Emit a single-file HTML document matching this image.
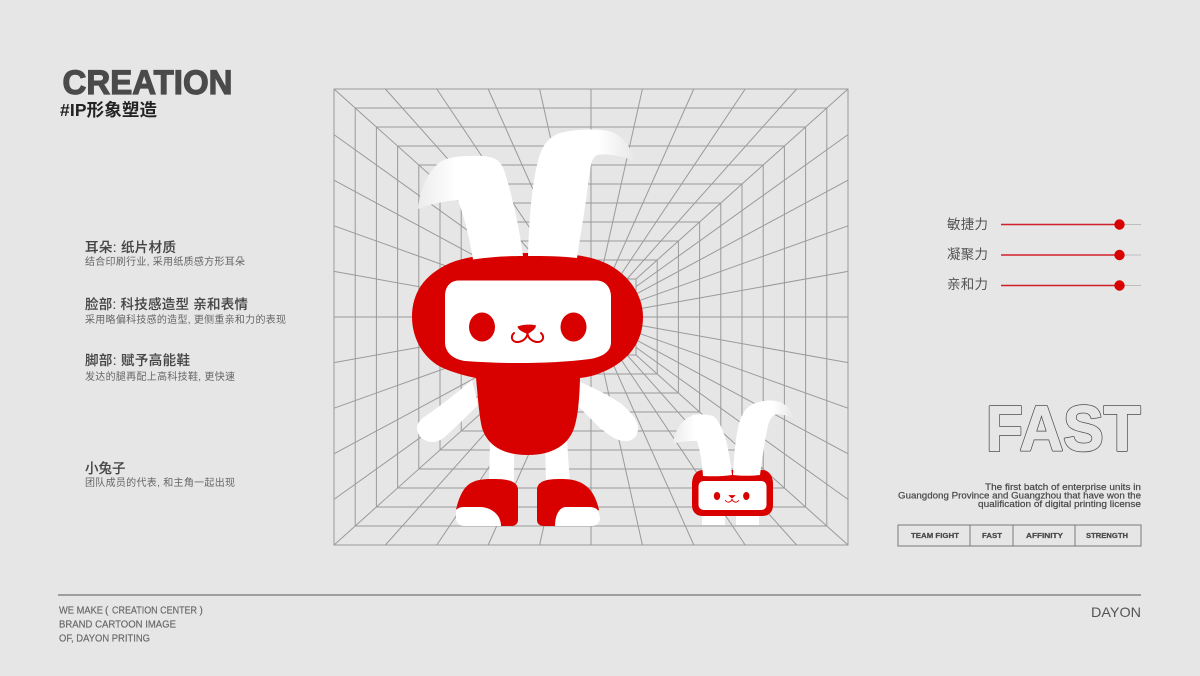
<!DOCTYPE html>
<html><head><meta charset="utf-8"><style>
html,body{margin:0;padding:0;background:#e6e6e6}
svg{display:block}
.cjk{font-family:"Liberation Sans","Noto Sans CJK SC",sans-serif}
.lat{font-family:"Liberation Sans",sans-serif}
</style></head><body>
<svg width="1200" height="676" viewBox="0 0 1200 676" xmlns="http://www.w3.org/2000/svg">
<defs>
<linearGradient id="g1" gradientUnits="userSpaceOnUse" x1="418" y1="190" x2="456" y2="190"><stop offset="0" stop-color="#ececec"/><stop offset="1" stop-color="#fff"/></linearGradient>
<linearGradient id="g2" gradientUnits="userSpaceOnUse" x1="634" y1="150" x2="598" y2="150"><stop offset="0" stop-color="#e8e8e8"/><stop offset="1" stop-color="#fff"/></linearGradient>
<linearGradient id="g3" gradientUnits="userSpaceOnUse" x1="673" y1="430" x2="695" y2="430"><stop offset="0" stop-color="#ececec"/><stop offset="1" stop-color="#fff"/></linearGradient>
<linearGradient id="g4" gradientUnits="userSpaceOnUse" x1="793" y1="410" x2="773" y2="410"><stop offset="0" stop-color="#e8e8e8"/><stop offset="1" stop-color="#fff"/></linearGradient>
</defs>
<rect width="1200" height="676" fill="#e6e6e6"/>
<g fill="none" stroke="#9a9a9a" stroke-width="1">
<rect x="334" y="89" width="514" height="456"/>
<rect x="355.2" y="108" width="471.6" height="418"/>
<rect x="376.4" y="127" width="429.2" height="380"/>
<rect x="397.6" y="146" width="386.8" height="342"/>
<rect x="418.8" y="165" width="344.4" height="304"/>
<rect x="440" y="184" width="302" height="266"/>
<rect x="461.2" y="203" width="259.6" height="228"/>
<rect x="482.4" y="222" width="217.2" height="190"/>
<rect x="503.6" y="241" width="174.8" height="152"/>
<rect x="524.8" y="260" width="132.4" height="114"/>
<rect x="546" y="279" width="90" height="76"/>
<path d="M334 89L546 279M848 89L636 279M334 545L546 355M848 545L636 355
M385.4 89L555 279M436.8 89L564 279M488.2 89L573 279M539.6 89L582 279M591 89V279M642.4 89L600 279M693.8 89L609 279M745.2 89L618 279M796.6 89L627 279
M385.4 545L555 355M436.8 545L564 355M488.2 545L573 355M539.6 545L582 355M591 545V355M642.4 545L600 355M693.8 545L609 355M745.2 545L618 355M796.6 545L627 355
M334 134.6L546 286.6M334 180.2L546 294.2M334 225.8L546 301.8M334 271.4L546 309.4M334 317H546M334 362.6L546 324.6M334 408.2L546 332.2M334 453.8L546 339.8M334 499.4L546 347.4
M848 134.6L636 286.6M848 180.2L636 294.2M848 225.8L636 301.8M848 271.4L636 309.4M848 317H636M848 362.6L636 324.6M848 408.2L636 332.2M848 453.8L636 339.8M848 499.4L636 347.4"/>
</g>

<!-- big rabbit -->
<g fill="#fff">
<path d="M490 440H514V485H489Z"/>
<path d="M545 440H567L570 485H546Z"/>
<path d="M472 380C458 392 444 403 430 413C422 418 416 423 417 429C418 437 425 442 433 442C440 442 446 436 450 432C460 423 470 413 478 405Z"/>
<path d="M580 382C594 388 608 395 620 403C630 411 638 420 638 428C638 436 633 441 626 441C615 441 608 434 600 428C592 420 584 412 577 405Z"/>
</g>
<path d="M527 253C560 253 585 254 603 262C625 271 643 292 643 317C643 345 625 365 595 375C590 376.500 585 377.500 580 378C579.500 398 578 415 575 425C570 445 552 455 528 455C505 455 488 447 482 428C479 415 478 398 476 378C465 376 452 372 443 368C425 360 412 340 412 317C412 292 425 275 448 264C465 256 495 253 527 253Z" fill="#d90000"/>
<path d="M473 259.500C470 240 465 220 458 200C445 201 430 204 418 209C420 190 427 172 440 162C448 157 460 156 470 156C480 155.500 488 156 493 158C499 160 502 165 504 170C512 195 519 225 523 256C505 256 490 257 473 259.500Z" fill="url(#g1)"/>
<path d="M528 256C529 225 531 190 537 165C541 148 546 138 560 133C575 129 600 128 612 132C625 137 632 150 634 161C628 158 610 153 597 155C594 157 592 160 591 165C589 175 588 185 587 193C584 215 580 238 577 258C560 256 545 256 528 256Z" fill="url(#g2)"/>
<path d="M458 280.500H597C606 281 611 288 611 297V342C611 352 602 357 590 359C550 364 505 364 465 361C452 359 445 352 445 342V296C445 287 450 281 458 280.500Z" fill="#fff"/>
<ellipse cx="482" cy="327" rx="13" ry="14.500" fill="#d90000"/>
<ellipse cx="573.500" cy="327" rx="13" ry="14.500" fill="#d90000"/>
<path d="M517.500 326.500C522 324.500 532 324 536 325.500C536 329 531 332 527.500 334C523 332 518 330 517.500 326.500Z" fill="#d90000"/>
<path d="M527.500 333.500C526.500 342 514 345 512 338.500C511.500 336.500 512.500 334.500 514 333M527.500 333.500C528.500 342 541 345 543 338.500C543.500 336.500 542.500 334.500 541 333" fill="none" stroke="#d90000" stroke-width="2" stroke-linecap="round"/>
<path d="M456 510C458 500 462 490 468 485C474 480 482 479 492 479C502 479 518 479 518 490V520C518 524 515 526 511 526H480Z" fill="#d90000"/>
<path d="M456 510C458 508 460 507 465 507H480C490 507 501 514 501 526H464C459 526 456 522 456 518Z" fill="#fff"/>
<path d="M599 510C597 500 592 490 586 486C580 481 572 479 562 479C552 479 537 479 537 490V520C537 524 540 526 544 526H575Z" fill="#d90000"/>
<path d="M599 513C598 509 595 507 589 507H566C560 507 555 514 555 526H592C597 526 600 522 600 518Z" fill="#fff"/>

<!-- small rabbit -->
<g fill="#fff">
<rect x="702" y="505" width="23" height="20"/>
<rect x="736" y="505" width="23" height="20"/>
</g>
<path d="M703 470H762C769 470 773 476 773 484V505C773 512 769 516 762 516H703C696 516 692 512 692 505V484C692 476 696 470 703 470Z" fill="#d90000"/>
<path d="M703 476C702 462 700 450 697 441C690 441 680 441 673 444C674 434 679 421 693 415C700 414 707 414 713 416C719 420 724 432 727 444C729 454 731 464 732 475C722 476.500 712 476.500 703 476Z" fill="url(#g3)"/>
<path d="M733 475C734 458 735 442 738 428C741 415 745 408 753 404C762 400 775 399 782 403C788 406 792 412 793 418C788 416 782 414 777 414C772 415 769 420 767 430C764 445 762 460 760 475C751 476 742 476 733 475Z" fill="url(#g4)"/>
<rect x="698.500" y="481" width="68" height="29" rx="5" fill="#fff"/>
<ellipse cx="717" cy="496" rx="3.200" ry="4" fill="#d90000"/>
<ellipse cx="746.300" cy="496" rx="3.200" ry="4" fill="#d90000"/>
<path d="M729 495.500H735L732 498Z" fill="#d90000" stroke="#d90000" stroke-width="0.8" stroke-linejoin="round"/>
<path d="M732 499C731 503 726 503 725.500 500M732 499C733 503 738 503 738.500 500" fill="none" stroke="#d90000" stroke-width="0.9"/>

<!-- heading -->
<text class="lat" x="62.500" y="94" font-size="34" font-weight="700" fill="#4a4a4a" stroke="#4a4a4a" stroke-width="1.200" textLength="170" lengthAdjust="spacingAndGlyphs">CREATION</text>
<text class="cjk" x="60" y="116" font-size="17.500" font-weight="700" fill="#222" textLength="97">#IP形象塑造</text>

<!-- left notes -->
<g class="cjk">
<g font-size="13.500" font-weight="500" fill="#444" stroke="#444" stroke-width="0.100">
<text x="85" y="252" textLength="91">耳朵: 纸片材质</text>
<text x="85" y="309" textLength="163">脸部: 科技感造型 亲和表情</text>
<text x="85" y="365" textLength="105">脚部: 赋予高能鞋</text>
<text x="85" y="473" textLength="40.500">小兔子</text>
</g>
<g font-size="10" fill="#666">
<text x="85" y="265" textLength="160">结合印刷行业, 采用纸质感方形耳朵</text>
<text x="85" y="323" textLength="201">采用略偏科技感的造型, 更侧重亲和力的表现</text>
<text x="85" y="380" textLength="150">发达的腿再配上高科技鞋, 更快速</text>
<text x="85" y="486" textLength="150">团队成员的代表, 和主角一起出现</text>
</g>
</g>

<!-- sliders -->
<g class="cjk" font-size="13.500" fill="#555">
<text x="947" y="229" textLength="41">敏捷力</text>
<text x="947" y="259" textLength="41">凝聚力</text>
<text x="947" y="289" textLength="41">亲和力</text>
</g>
<g stroke="#bdbdbd" stroke-width="1"><path d="M1119 224.500H1141M1119 255H1141M1119 285.500H1141"/></g>
<g stroke="#d0202a" stroke-width="1.500"><path d="M1001 224.500H1119M1001 255H1119M1001 285.500H1119"/></g>
<g fill="#d90000"><circle cx="1119.500" cy="224.500" r="5.200"/><circle cx="1119.500" cy="255" r="5.200"/><circle cx="1119.500" cy="285.500" r="5.200"/></g>

<!-- FAST -->
<text class="lat" x="986" y="450.500" font-size="64" font-weight="700" fill="#e6e6e6" stroke="#4a4a4a" stroke-width="2.600" stroke-linejoin="round" textLength="154.500" lengthAdjust="spacingAndGlyphs">FAST</text>
<text class="lat" x="986" y="450.500" font-size="64" font-weight="700" fill="#e6e6e6" stroke="#e6e6e6" stroke-width="1.100" stroke-linejoin="round" textLength="154.500" lengthAdjust="spacingAndGlyphs">FAST</text>
<g class="lat" font-size="8.800" fill="#4a4a4a" stroke="#4a4a4a" stroke-width="0.200">
<text x="985" y="490" textLength="156" lengthAdjust="spacingAndGlyphs">The first batch of enterprise units in</text>
<text x="898" y="498.500" textLength="243" lengthAdjust="spacingAndGlyphs">Guangdong Province and Guangzhou that have won the</text>
<text x="978" y="507" textLength="163" lengthAdjust="spacingAndGlyphs">qualification of digital printing license</text>
</g>
<rect x="898" y="525" width="243" height="21" fill="none" stroke="#7a7a7a" stroke-width="1"/>
<path d="M970 525V546M1013 525V546M1075 525V546" stroke="#7a7a7a" stroke-width="1"/>
<g class="lat" font-size="7.500" font-weight="700" fill="#4a4a4a" stroke="#4a4a4a" stroke-width="0.250">
<text x="911" y="538" textLength="48" lengthAdjust="spacingAndGlyphs">TEAM FIGHT</text>
<text x="982" y="538" textLength="20" lengthAdjust="spacingAndGlyphs">FAST</text>
<text x="1026" y="538" textLength="37" lengthAdjust="spacingAndGlyphs">AFFINITY</text>
<text x="1086" y="538" textLength="42" lengthAdjust="spacingAndGlyphs">STRENGTH</text>
</g>

<!-- footer -->
<rect x="58" y="594.500" width="1083" height="1" fill="#555"/>
<g class="lat" font-size="10" fill="#666" stroke="#666" stroke-width="0.150">
<text x="59" y="613.500" textLength="44" lengthAdjust="spacingAndGlyphs">WE MAKE</text>
<text x="105" y="613.500">(</text>
<text x="112" y="613.500" textLength="85" lengthAdjust="spacingAndGlyphs">CREATION CENTER</text>
<text x="199.500" y="613.500">)</text>
<text x="59" y="627.500" textLength="117" lengthAdjust="spacingAndGlyphs">BRAND CARTOON IMAGE</text>
<text x="59" y="641.500" textLength="91" lengthAdjust="spacingAndGlyphs">OF, DAYON PRITING</text>
</g>
<text class="lat" x="1091" y="617" font-size="14" fill="#555" textLength="50" lengthAdjust="spacingAndGlyphs">DAYON</text>
</svg>
</body></html>
